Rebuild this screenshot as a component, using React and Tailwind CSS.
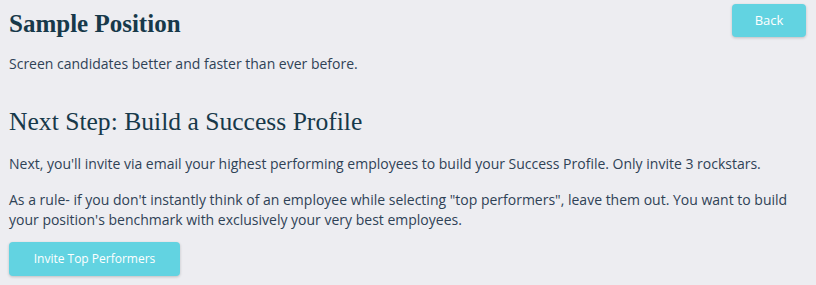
export default function App() {
  return (
    <div className="w-[816px] h-[285px] bg-[#ededf1] overflow-hidden">
      <div className="px-[9px] pt-[4px]">
        <div className="flex items-start justify-between">
          <h1 className="mt-[4px] text-[25px] leading-[32px] font-bold text-[#17394a] font-['Liberation_Serif',serif]">Sample Position</h1>
          <button className="mr-[1px] w-[74px] h-[33px] rounded-[4px] bg-[#62d3e1] text-white text-[13px] font-['Open_Sans',sans-serif] shadow-[0_1px_3px_rgba(0,0,0,0.2)]">Back</button>
        </div>
        <p className="mt-[14px] text-[14px] leading-[20px] text-[#2f4256] font-['Open_Sans',sans-serif]">Screen candidates better and faster than ever before.</p>
        <h2 className="mt-[32px] text-[25.6px] leading-[32px] text-[#17394a] font-['Liberation_Serif',serif]">Next Step: Build a Success Profile</h2>
        <p className="mt-[16px] text-[14px] leading-[20px] text-[#2f4256] font-['Open_Sans',sans-serif]">Next, you'll invite via email your highest performing employees to build your Success Profile. Only invite 3 rockstars.</p>
        <p className="mt-[16px] text-[14px] leading-[20px] text-[#2f4256] font-['Open_Sans',sans-serif]">As a rule- if you don't instantly think of an employee while selecting "top performers", leave them out. You want to build your position's benchmark with exclusively your very best employees.</p>
        <button className="mt-[12px] w-[171px] h-[34px] rounded-[4px] bg-[#62d3e1] text-white text-[12px] font-medium font-['Open_Sans',sans-serif] shadow-[0_1px_3px_rgba(0,0,0,0.2)]">Invite Top Performers</button>
      </div>
    </div>
  );
}
